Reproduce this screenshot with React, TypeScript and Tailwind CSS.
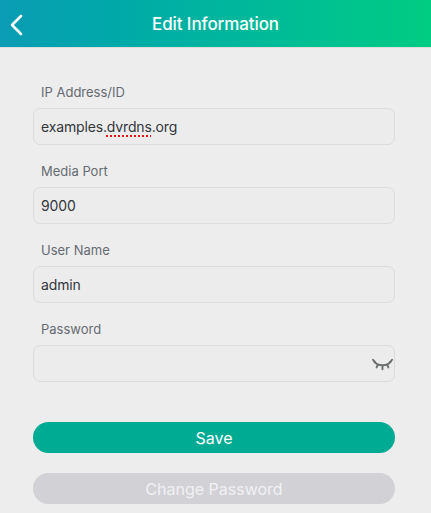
import React from 'react';

const font = { fontFamily: 'Inter, "Noto Sans", sans-serif' };

const EyeClosed = () => (
  <svg width="21" height="14" viewBox="0 0 22 14" fill="none" stroke="#6b6f6f" strokeWidth="2" strokeLinecap="round">
    <path d="M2.5 3.5 C6 8.5 16 8.5 19.5 3.5" />
    <path d="M1 1.5 L3 4" />
    <path d="M21 1.5 L19 4" />
    <path d="M6 7 L4.8 9.5" />
    <path d="M16 7 L17.2 9.5" />
    <path d="M11 8 L11 11.5" />
  </svg>
);

const Field = ({ label, children }: { label: string; children?: React.ReactNode }) => (
  <div className="flex flex-col">
    <label className="pl-2 text-[13px] leading-[20px] text-[#666b72]">{label}</label>
    <div className="mt-[6px] flex h-[37px] items-center justify-between rounded-[7px] border border-[#dcdcdc] bg-[#ececec] pl-[7px] text-[14px] tracking-[-0.15px] text-[#33363b]">
      {children}
    </div>
  </div>
);

export default function App() {
  return (
    <div className="flex h-[513px] w-[431px] flex-col overflow-hidden bg-[#ededed]" style={font}>
      <header className="relative flex h-[48px] shrink-0 items-center justify-center border-b border-[#dedede] bg-gradient-to-r from-[#0a9cb4] to-[#00cc82] pt-[3px]">
        <svg className="absolute left-[9px] top-[14px]" width="15" height="22" viewBox="0 0 15 22" fill="none" stroke="#fff" strokeWidth="2.6" strokeLinecap="round" strokeLinejoin="round">
          <path d="M12 2 L3 11 L12 20" />
        </svg>
        <h1 className="text-[17px] font-medium tracking-[-0.1px] text-white">Edit Information</h1>
      </header>

      <main className="flex flex-col pl-[33px] pr-[36px] pt-[34px]">
        <div className="flex flex-col gap-[16px]">
          <Field label="IP Address/ID">
            <span>
              examples.
              <span className="underline decoration-[#e8121b] decoration-dotted decoration-[2px] underline-offset-[3px]">dvrdns</span>
              .org
            </span>
          </Field>
          <Field label="Media Port">9000</Field>
          <Field label="User Name">admin</Field>
          <Field label="Password">
            <span />
            <span className="mt-[2px] mr-[1px] flex">
              <EyeClosed />
            </span>
          </Field>
        </div>

        <button className="mt-[40px] h-[31px] rounded-full bg-[#00ab94] text-[16px] text-white">Save</button>
        <button className="mt-[20px] h-[31px] rounded-full bg-[#d1d1d6] text-[16px] text-[#f1f1f3]">Change Password</button>
      </main>
    </div>
  );
}
